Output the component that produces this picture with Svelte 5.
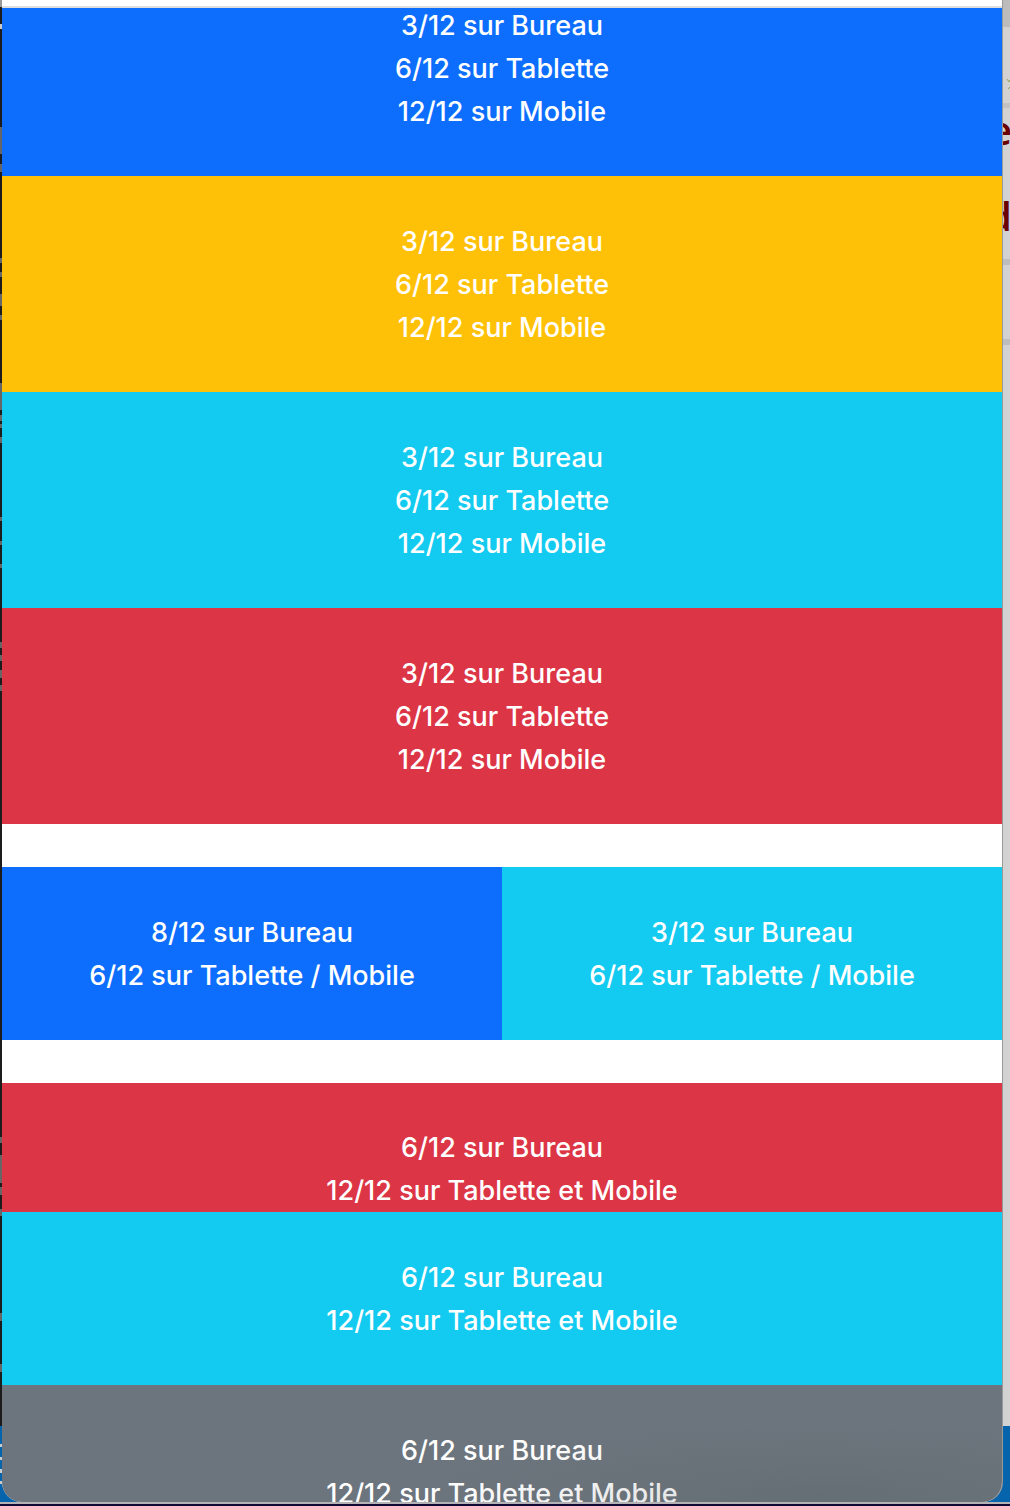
<script>
  const stacked = ['3/12 sur Bureau', '6/12 sur Tablette', '12/12 sur Mobile'];
  const wide = ['6/12 sur Bureau', '12/12 sur Tablette et Mobile'];

  const rows = [
    [
      { color: 'primary', lines: stacked },
      { color: 'warning', lines: stacked },
      { color: 'info', lines: stacked },
      { color: 'danger', lines: stacked }
    ],
    [
      { color: 'primary', half: true, lines: ['8/12 sur Bureau', '6/12 sur Tablette / Mobile'] },
      { color: 'info', half: true, lines: ['3/12 sur Bureau', '6/12 sur Tablette / Mobile'] }
    ],
    [
      { color: 'danger', flush: true, lines: wide },
      { color: 'info', lines: wide },
      { color: 'secondary', lines: wide }
    ]
  ];

  // Slivers of the editor text behind the window: [top, height]
  const slivers = [
    [127, 27], [164, 8], [258, 5], [272, 5], [294, 12], [315, 5], [383, 27],
    [415, 6], [424, 4], [437, 6], [517, 4], [541, 4], [564, 4], [642, 6],
    [655, 6], [670, 8], [685, 6], [1137, 6], [1155, 28], [1187, 8], [1209, 7],
    [1313, 8], [1364, 8]
  ];
</script>

<div class="desktop">
  <div class="behind" aria-hidden="true">
    <div class="editor">
      <svg width="2" height="1426">
        <rect width="2" height="7" fill="#999" />
        <rect y="24" width="2" height="5" fill="#ccc" />
        {#each slivers as [y, h]}
          <rect {y} width="2" height={h} fill="#666" />
        {/each}
      </svg>
    </div>
    <div class="page">
      <div class="head"></div>
      <span class="glyph first">e</span>
      <span class="glyph second">d</span>
      <svg width="8" height="360">
        <path d="M5 79l2 3M6 89l2-2M7 82l1-2" stroke="#99a355" fill="none" />
        <rect y="103" width="8" height="5" fill="#c3c3c3" />
        <rect y="259" width="8" height="6" fill="#bdbdbd" />
        <rect y="339" width="8" height="6" fill="#bdbdbd" />
      </svg>
    </div>
    <div class="footer">
      <svg width="2" height="76">
        <path d="M0 18h2v3H0zM0 31h2v3H0zM0 43h2v4H0zM0 55h2v3H0z" fill="#ccc" />
      </svg>
    </div>
    <div class="edge"></div>
  </div>

  <main class="window">
    <div class="toolbar"></div>
    <div class="viewport">
      <div class="content">
        {#each rows as row}
          <section class="row">
            {#each row as cell}
              <div class="cell {cell.color}" class:half={cell.half} class:flush={cell.flush}>
                {#each cell.lines as line}
                  <p>{line}</p>
                {/each}
              </div>
            {/each}
          </section>
        {/each}
      </div>
      <div class="shade"></div>
    </div>
  </main>
</div>

<style>
  :global(body) {
    margin: 0;
  }

  .desktop {
    position: relative;
    box-sizing: border-box;
    height: 100vh;
    padding: 0 8px 4px 2px;
    overflow: hidden;
    background: #100733;
    font-family: Inter, "Liberation Sans", sans-serif;
  }

  .behind {
    position: absolute;
    inset: 0 0 2px;
    display: grid;
    grid-template-columns: 1fr 1fr;
    grid-template-rows: 1fr 76px 2px;
  }

  .editor {
    background: #1d1b1c;
  }

  .page {
    position: relative;
    background: #d2d2d2;
  }

  .page svg {
    position: absolute;
    top: 0;
    right: 0;
  }

  .head {
    height: 27px;
    background: #bcbcbc;
  }

  .glyph {
    position: absolute;
    right: -2px;
    color: #6b0000;
    font: 600 40px/40px "Open Sans", sans-serif;
  }

  .first {
    top: 110px;
  }

  .second {
    top: 196px;
  }

  .footer {
    grid-column: 1 / -1;
    background: #0564ac;
  }

  .edge {
    grid-column: 1 / -1;
    background: #b4b2b4;
  }

  .behind svg {
    display: block;
  }

  .window {
    position: relative;
    display: flex;
    flex-direction: column;
    height: 100%;
    overflow: hidden;
    border-radius: 0 0 20px 20px;
    background: #fff;
    box-shadow: 1px 0 0 #999;
  }

  .toolbar {
    flex: none;
    height: 6px;
    border-bottom: 2px solid #dededc;
  }

  .viewport {
    position: relative;
    flex: 1;
    min-height: 0;
    overflow: hidden;
  }

  .content {
    display: flex;
    flex-direction: column;
    gap: 43px;
    margin-top: -48px;
  }

  .row {
    display: flex;
    flex-wrap: wrap;
  }

  .cell {
    box-sizing: border-box;
    width: 100%;
    padding: 44px 0 43px;
    color: #fff;
    font-size: 27px;
    font-weight: 500;
    line-height: 43px;
    text-align: center;
  }

  .half {
    width: 50%;
  }

  .flush {
    padding: 43px 0 0;
  }

  p {
    margin: 0;
  }

  .primary {
    background: #0d6efd;
  }

  .warning {
    background: #ffc107;
  }

  .info {
    background: #13caf0;
  }

  .danger {
    background: #dc3545;
  }

  .secondary {
    background: #6c757d;
  }

  .shade {
    position: absolute;
    right: 0;
    bottom: 0;
    width: 60%;
    height: 80px;
    background: radial-gradient(ellipse at 70% 100%, rgb(80 85 88 / 22%), transparent 70%);
  }
</style>
